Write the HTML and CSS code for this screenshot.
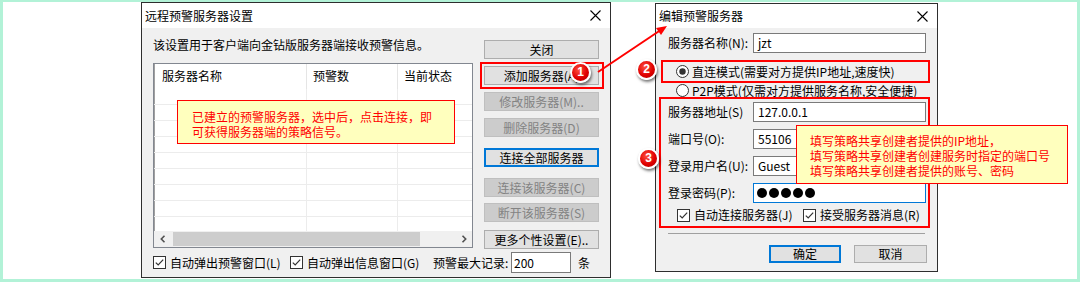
FILE: index.html
```html
<!DOCTYPE html>
<html lang="zh-CN">
<head>
<meta charset="utf-8">
<title>远程预警服务器设置</title>
<link rel="stylesheet" href="styles.css">
</head>
<body>
<div class="frame">
  <section class="dlg dlg-remote">
    <header class="titlebar">
      <span class="title">远程预警服务器设置</span>
      <svg class="close" viewBox="0 0 11 11"><path d="M0.5 0.5L10.5 10.5M10.5 0.5L0.5 10.5" stroke="#000" stroke-width="1.1" fill="none"/></svg>
    </header>
    <div class="remote-body">
      <p class="desc">该设置用于客户端向金钻版服务器端接收预警信息。</p>
      <div class="btncol">
        <button class="btn g-first">关闭</button>
        <button class="btn g-s">添加服务器(A)</button>
        <button class="btn g-s" disabled>修改服务器(M)..</button>
        <button class="btn g-s" disabled>删除服务器(D)</button>
        <button class="btn btn-default g-l">连接全部服务器</button>
        <button class="btn g-l" disabled>连接该服务器(C)</button>
        <button class="btn g-xs" disabled>断开该服务器(S)</button>
        <button class="btn g-m">更多个性设置(E)..</button>
      </div>
      <div class="list">
        <div class="list-head">
          <div class="hc c1">服务器名称</div>
          <div class="hc c2">预警数</div>
          <div class="hc c3">当前状态</div>
        </div>
        <div class="list-rows">
          <div class="row"><span class="c1"></span><span class="c2"></span><span class="c3"></span></div>
          <div class="row"><span class="c1"></span><span class="c2"></span><span class="c3"></span></div>
          <div class="row"><span class="c1"></span><span class="c2"></span><span class="c3"></span></div>
          <div class="row"><span class="c1"></span><span class="c2"></span><span class="c3"></span></div>
          <div class="row"><span class="c1"></span><span class="c2"></span><span class="c3"></span></div>
          <div class="row"><span class="c1"></span><span class="c2"></span><span class="c3"></span></div>
          <div class="row"><span class="c1"></span><span class="c2"></span><span class="c3"></span></div>
          <div class="row"><span class="c1"></span><span class="c2"></span><span class="c3"></span></div>
          <div class="row"><span class="c1"></span><span class="c2"></span><span class="c3"></span></div>
        </div>
        <div class="hscroll">
          <span class="sarrow"><svg viewBox="0 0 6 8"><path d="M4.5 0.8L1.3 4L4.5 7.2" stroke="#505050" stroke-width="1.6" fill="none"/></svg></span>
          <div class="track"><div class="thumb"></div></div>
          <span class="sarrow"><svg viewBox="0 0 6 8"><path d="M1.5 0.8L4.7 4L1.5 7.2" stroke="#505050" stroke-width="1.6" fill="none"/></svg></span>
        </div>
      </div>
      <div class="bottombar">
        <label class="chk chk-w1"><svg class="cbox" viewBox="0 0 13 13"><rect x="0.5" y="0.5" width="12" height="12" fill="#fff" stroke="#333"/><path d="M2.8 6.6L5.2 9L10.2 3.6" stroke="#333" stroke-width="1.2" fill="none"/></svg>自动弹出预警窗口(L)</label>
        <label class="chk chk-w2"><svg class="cbox" viewBox="0 0 13 13"><rect x="0.5" y="0.5" width="12" height="12" fill="#fff" stroke="#333"/><path d="M2.8 6.6L5.2 9L10.2 3.6" stroke="#333" stroke-width="1.2" fill="none"/></svg>自动弹出信息窗口(G)</label>
        <span class="maxlabel">预警最大记录:</span>
        <span class="input input-max">200</span>
        <span class="unit">条</span>
      </div>
    </div>
  </section>

  <section class="dlg dlg-edit">
    <header class="titlebar titlebar-edit">
      <span class="title">编辑预警服务器</span>
      <svg class="close" viewBox="0 0 11 11"><path d="M0.5 0.5L10.5 10.5M10.5 0.5L0.5 10.5" stroke="#000" stroke-width="1.1" fill="none"/></svg>
    </header>
    <div class="edit-body">
      <div class="field"><span class="lbl">服务器名称(N):</span><span class="input">jzt</span></div>
      <div class="radio-row radio-first"><svg class="rbox" viewBox="0 0 13 13"><circle cx="6.5" cy="6.5" r="6" fill="#fff" stroke="#333"/><circle cx="6.5" cy="6.5" r="3.2" fill="#333"/></svg>直连模式(需要对方提供IP地址,速度快)</div>
      <div class="radio-row"><svg class="rbox" viewBox="0 0 13 13"><circle cx="6.5" cy="6.5" r="6" fill="#fff" stroke="#333"/></svg>P2P模式(仅需对方提供服务名称,安全便捷)</div>
      <div class="fields">
        <div class="field"><span class="lbl">服务器地址(S)</span><span class="input">127.0.0.1</span></div>
        <div class="field"><span class="lbl">端口号(O):</span><span class="input">55106</span></div>
        <div class="field"><span class="lbl">登录用户名(U):</span><span class="input">Guest</span></div>
        <div class="field"><span class="lbl">登录密码(P):</span><span class="input input-focus"><i class="dot"></i><i class="dot"></i><i class="dot"></i><i class="dot"></i><i class="dot"></i></span></div>
      </div>
      <div class="checks">
        <label class="chk chk-w3"><svg class="cbox" viewBox="0 0 13 13"><rect x="0.5" y="0.5" width="12" height="12" fill="#fff" stroke="#333"/><path d="M2.8 6.6L5.2 9L10.2 3.6" stroke="#333" stroke-width="1.2" fill="none"/></svg>自动连接服务器(J)</label>
        <label class="chk"><svg class="cbox" viewBox="0 0 13 13"><rect x="0.5" y="0.5" width="12" height="12" fill="#fff" stroke="#333"/><path d="M2.8 6.6L5.2 9L10.2 3.6" stroke="#333" stroke-width="1.2" fill="none"/></svg>接受服务器消息(R)</label>
      </div>
      <div class="sep"></div>
      <div class="actions">
        <button class="btn btn-default btn-ok">确定</button>
        <button class="btn btn-cancel">取消</button>
      </div>
    </div>
  </section>
</div>

<div class="notes">
  <svg class="arrow" viewBox="0 0 1080 282">
    <line x1="598" y1="72" x2="660" y2="30.5" stroke="#f00" stroke-width="2"/>
    <polygon points="667,26 661,35 656,28" fill="#f00"/>
  </svg>
  <div class="mark mark-add"></div>
  <div class="mark mark-mode"></div>
  <div class="mark mark-conn"></div>
  <div class="callout callout-list">已建立的预警服务器，选中后，点击连接，即<br>可获得服务器端的策略信号。</div>
  <div class="callout callout-conn">填写策略共享创建者提供的IP地址，<br>填写策略共享创建者创建服务时指定的端口号<br>填写策略共享创建者提供的账号、密码</div>
  <span class="badge badge-1">1</span>
  <span class="badge badge-2">2</span>
  <span class="badge badge-3">3</span>
</div>
</body>
</html>
```
FILE: styles.css
```css
* { box-sizing: border-box; margin: 0; padding: 0; }
html, body { width: 1080px; height: 282px; overflow: hidden; background: #fff; }
body {
  position: relative;
  font-family: "Noto Sans CJK SC", "Noto Sans", sans-serif;
  font-size: 12px;
  line-height: 14px;
  color: #000;
}

.frame {
  width: 1080px;
  height: 282px;
  border: 3px solid #b2f2d7;
  border-top-width: 2px;
  background: #fff;
  display: flex;
  align-items: flex-start;
}

.dlg {
  background: #f0f0f0;
  border: 1px solid #2e2e2e;
  display: flex;
  flex-direction: column;
}
.dlg-remote { margin-left: 138px; width: 470px; height: 276px; }
.dlg-edit { margin-left: 44px; margin-top: 1px; width: 283px; }

.titlebar {
  background: #fff;
  height: 25px;
  display: flex;
  align-items: center;
  justify-content: space-between;
  padding: 0 9px 0 3px;
  flex: none;
}
.titlebar-edit { height: 24px; }
.title { font-size: 12px; white-space: nowrap; }
.close { width: 11px; height: 11px; display: block; }

/* ---- remote dialog body ---- */
.remote-body {
  flex: 1;
  display: grid;
  grid-template-columns: 320px 115px;
  grid-template-rows: auto auto 1fr;
  column-gap: 11px;
  padding: 10px 0 0 11px;
}
.desc { grid-column: 1; grid-row: 1; height: 14px; margin-bottom: 9px; white-space: nowrap; }
.btncol { grid-column: 2; grid-row: 1 / 3; display: flex; flex-direction: column; }

.btn {
  font: inherit;
  font-size: 12px;
  line-height: 14px;
  height: 19px;
  background: #e1e1e1;
  border: 1px solid #adadad;
  color: #000;
  display: flex;
  align-items: center;
  justify-content: center;
  white-space: nowrap;
}
.btn:disabled { background: #cccccc; border-color: #bfbfbf; color: #838383; }
.btn-default { border: 2px solid #0078d7; }
.g-first { margin-top: 2px; }
.g-xs { margin-top: 6px; }
.g-s { margin-top: 7px; }
.g-m { margin-top: 8px; }
.g-l { margin-top: 11px; }

.list {
  grid-column: 1;
  grid-row: 2;
  align-self: start;
  height: 185px;
  background: #fff;
  border: 1px solid #828790;
  box-shadow: inset 1px 0 0 #a0a0a0;
  display: flex;
  flex-direction: column;
  overflow: hidden;
}
.list-head { display: flex; height: 25px; flex: none; }
.hc { display: flex; align-items: center; white-space: nowrap; }
.list-head .c1 { padding-left: 8px; border-right: 1px solid #e5e5e5; }
.list-head .c2, .list-head .c3 { padding-left: 6px; }
.list-head .c2 { border-right: 1px solid #e5e5e5; }
.c1 { width: 153px; }
.c2 { width: 91px; }
.c3 { flex: 1; }
.list-rows { flex: 1; overflow: hidden; }
.row { display: flex; height: 16px; border-bottom: 1px solid #ececec; }
.row .c1, .row .c2 { border-right: 1px solid #ececec; }

.hscroll { height: 16px; flex: none; display: flex; align-items: stretch; background: #f0f0f0; }
.sarrow { width: 17px; display: flex; align-items: center; justify-content: center; }
.sarrow svg { width: 6px; height: 8px; }
.track { flex: 1; display: flex; align-items: center; padding: 0 2px; }
.thumb { width: 247px; height: 14px; background: #cdcdcd; }

.bottombar {
  grid-column: 1 / 3;
  grid-row: 3;
  align-self: start;
  margin-top: 3px;
  height: 21px;
  display: flex;
  align-items: center;
  white-space: nowrap;
}
.chk { display: inline-flex; align-items: center; gap: 4px; white-space: nowrap; }
.cbox { width: 13px; height: 13px; flex: none; }
.chk-w1 { width: 137px; }
.chk-w2 { width: 143px; }
.chk-w3 { width: 126px; }
.maxlabel { width: 78px; }
.input {
  height: 20px;
  background: #fff;
  border: 1px solid #7a7a7a;
  display: flex;
  align-items: center;
  padding: 0 4px;
  white-space: nowrap;
}
.input-max { width: 60px; height: 21px; padding-left: 2px; }
.unit { margin-left: 7px; }

/* ---- edit dialog body ---- */
.edit-body { padding: 5px 10px 8px 12px; display: flex; flex-direction: column; }
.field { display: grid; grid-template-columns: 85px 173px; align-items: center; height: 20px; }
.lbl { white-space: nowrap; }
.fields { margin-top: 2px; display: flex; flex-direction: column; gap: 7px; }
.radio-row { display: flex; align-items: center; gap: 3px; padding-left: 8px; height: 19px; white-space: nowrap; }
.radio-first { margin-top: 9px; }
.rbox { width: 13px; height: 13px; flex: none; }
.input-focus { border-color: #0078d7; gap: 2px; padding-left: 3px; }
.dot { display: block; width: 10px; height: 10px; border-radius: 50%; background: #000; }
.checks { margin-top: 5px; height: 14px; display: flex; align-items: center; padding-left: 9px; }
.sep { margin-top: 11px; height: 1px; background: #a0a0a0; width: 257px; }
.actions { margin-top: 11px; display: flex; justify-content: flex-end; gap: 13px; }
.btn-ok { width: 72px; height: 18px; }
.btn-cancel { width: 73px; height: 18px; }

/* ---- annotations ---- */
.notes { position: absolute; left: 0; top: 0; width: 1080px; height: 282px; pointer-events: none; }
.arrow { position: absolute; left: 0; top: 0; width: 1080px; height: 282px; }
.mark { position: absolute; border: 2px solid #f00; }
.mark-add { left: 480px; top: 62px; width: 124px; height: 27px; }
.mark-mode { left: 661px; top: 60px; width: 269px; height: 23px; }
.mark-conn { left: 659px; top: 97px; width: 271px; height: 131px; }

.callout {
  position: absolute;
  background: #ffffbe;
  border: 1px solid #f00;
  color: #f00;
  font-size: 12px;
  line-height: 15px;
  white-space: nowrap;
}
.callout-list { left: 177px; top: 100px; width: 278px; height: 44px; padding: 8px 0 0 14px; }
.callout-conn { left: 796px; top: 125px; width: 272px; height: 59px; padding: 7px 0 0 13px; }

.badge {
  position: absolute;
  width: 21px;
  height: 21px;
  border-radius: 50%;
  background: radial-gradient(circle at 40% 35%, #ff5040 0%, #e00000 55%, #a80000 100%);
  border: 2px solid #fff;
  box-shadow: 1px 2px 3px rgba(0, 0, 0, 0.55);
  color: #fff;
  font: bold 12px/17px "Liberation Sans", Arial, sans-serif;
  text-align: center;
}
.badge-1 { left: 570px; top: 62px; }
.badge-2 { left: 636px; top: 59px; }
.badge-3 { left: 638px; top: 148px; }
```
